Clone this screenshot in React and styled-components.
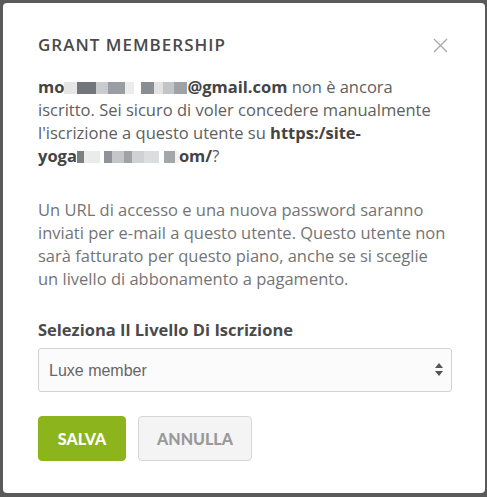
import styled, { createGlobalStyle } from 'styled-components'

const GlobalStyle = createGlobalStyle`
  html, body {
    margin: 0;
    padding: 0;
  }
  body {
    width: 487px;
    height: 497px;
    background: #5a5a5a;
    font-family: 'Open Sans', 'Liberation Sans', sans-serif;
    overflow: hidden;
  }
`

const Modal = styled.div`
  margin: 3px 0 0 3px;
  width: 482px;
  height: 490px;
  box-sizing: border-box;
  padding: 30px 33px 0 35px;

  background: #fff;
  border-radius: 4px;
`

const Header = styled.div`
  display: flex;
  align-items: center;
  justify-content: space-between;
  margin-bottom: 18px;
`

const Title = styled.h2`
  margin: 0;
  color: #4a4a4a;
  font-size: 17px;
  font-weight: 600;
  line-height: 24px;
  letter-spacing: 1px;
  text-transform: uppercase;
`

const CloseButton = styled.button`
  margin: 0 4px 0 0;
  padding: 0;
  width: 15px;
  height: 15px;
  border: none;
  background: none;
  display: flex;
  cursor: pointer;
  svg {
    width: 15px;
    height: 15px;
  }
`

const Text = styled.p`
  margin: 0 0 ${(props) => props.gap || 0}px;
  color: ${(props) => props.color || '#606060'};
  font-size: 16.5px;
  line-height: 23px;
  white-space: nowrap;
  strong {
    color: #444;
    font-weight: 700;
  }
`

const Redacted = styled.span`
  display: inline-flex;
  vertical-align: -1px;
  height: 12px;
`

const Pixel = styled.span`
  display: block;
  height: 12px;
  width: ${(props) => props.w}px;
  background: ${(props) => props.c};
`

const Label = styled.label`
  display: block;
  margin-bottom: 7px;
  color: #4a4a4a;
  font-size: 16.5px;
  font-weight: 700;
  line-height: 23px;
`

const SelectWrap = styled.div`
  position: relative;
  margin-bottom: 24px;
  svg {
    position: absolute;
    right: 9px;
    top: 14px;
    width: 8px;
    height: 15px;
    pointer-events: none;
  }
`

const Select = styled.select`
  display: block;
  width: 100%;
  height: 44px;
  padding: 0 30px 0 10px;
  box-sizing: border-box;
  appearance: none;
  background: #fbfbfb;
  border: 1px solid #d2d2d2;
  border-radius: 3px;
  color: #666;
  font-family: 'Liberation Sans', Arial, sans-serif;
  font-size: 16px;
  outline: none;
`

const Actions = styled.div`
  display: flex;
  gap: 12px;
`

const Button = styled.button`
  width: ${(props) => (props.primary ? 88 : 114)}px;
  height: 45px;
  padding: 0;
  box-sizing: border-box;
  border-radius: 4px;
  border: 1px solid ${(props) => (props.primary ? '#8bb31b' : '#d6d6d6')};
  background: ${(props) => (props.primary ? '#8cb41c' : '#f4f4f4')};
  color: ${(props) => (props.primary ? '#fff' : '#999')};
  font-family: 'Lato', 'Open Sans', sans-serif;
  font-size: 16px;
  font-weight: 900;
  text-transform: uppercase;
  cursor: pointer;
`

const emailBlocks = [
  [13, '#e6e6e6'],
  [19, '#72767b'],
  [12, '#c9cbcd'],
  [17, '#9a9ea2'],
  [9, '#ececec'],
  [7, '#fff'],
  [13, '#8a8e93'],
  [9, '#e2e2e2'],
  [11, '#c2c4c6'],
  [13, '#9fa2a6'],
]

const siteBlocks = [
  [7, '#7c8085'],
  [16, '#ebebeb'],
  [4, '#fff'],
  [8, '#8f9296'],
  [12, '#c4c6c8'],
  [8, '#a0a3a6'],
  [12, '#cfd1d3'],
  [15, '#dcdddf'],
  [5, '#fff'],
  [11, '#a4a7aa'],
  [4, '#f2f2f2'],
]

const Redact = ({ blocks }) => (
  <Redacted>
    {blocks.map(([w, c], i) => (
      <Pixel key={i} w={w} c={c} />
    ))}
  </Redacted>
)

const App = () => {
  return (
    <>
      <GlobalStyle />
      <Modal>
        <Header>
          <Title>Grant Membership</Title>
          <CloseButton aria-label='Chiudi'>
            <svg viewBox='0 0 15 15' fill='none' stroke='#a8a8a8' strokeWidth='1.3'>
              <path d='M1 1l13 13M14 1L1 14' />
            </svg>
          </CloseButton>
        </Header>

        <Text gap={31}>
          <strong>
            mo
            <Redact blocks={emailBlocks} />
            @gmail.com
          </strong>{' '}
          non è ancora
          <br />
          iscritto. Sei sicuro di voler concedere manualmente
          <br />
          l'iscrizione a questo utente su <strong>https:/site-</strong>
          <br />
          <strong>
            yoga
            <Redact blocks={siteBlocks} />
            om/
          </strong>
          ?
        </Text>

        <Text gap={28} color='#747474'>
          Un URL di accesso e una nuova password saranno
          <br />
          inviati per e-mail a questo utente. Questo utente non
          <br />
          sarà fatturato per questo piano, anche se si sceglie
          <br />
          un livello di abbonamento a pagamento.
        </Text>

        <Label htmlFor='level'>Seleziona Il Livello Di Iscrizione</Label>
        <SelectWrap>
          <Select id='level' defaultValue='luxe'>
            <option value='luxe'>Luxe member</option>
          </Select>
          <svg viewBox='0 0 8 15' fill='#555'>
            <path d='M4 1L8 6H0z' />
            <path d='M0 9h8l-4 5z' />
          </svg>
        </SelectWrap>

        <Actions>
          <Button primary>Salva</Button>
          <Button>Annulla</Button>
        </Actions>
      </Modal>
    </>
  )
}

export default App
